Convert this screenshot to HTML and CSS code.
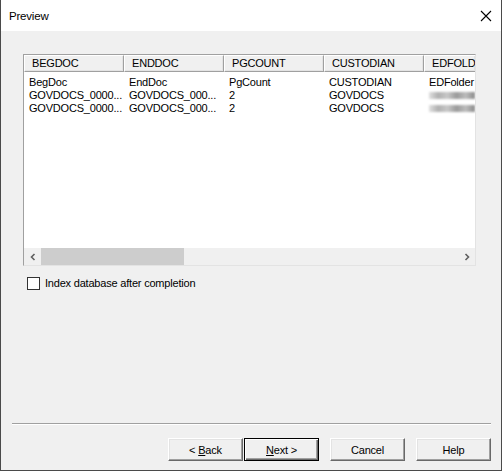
FILE: index.html
```html
<!DOCTYPE html>
<html>
<head>
<meta charset="utf-8">
<link rel="stylesheet" href="styles.css">
</head>
<body>
<div class="window">
  <div class="titlebar">
    <span class="title">Preview</span>
    <svg class="close" width="12" height="12" viewBox="0 0 12 12"><path d="M1 1 L11 11 M11 1 L1 11" stroke="#000" stroke-width="1.1" fill="none"/></svg>
  </div>
  <div class="content">
    <div class="list">
      <div class="header">
        <div class="hcell">BEGDOC</div>
        <div class="hcell">ENDDOC</div>
        <div class="hcell">PGCOUNT</div>
        <div class="hcell">CUSTODIAN</div>
        <div class="hcell last">EDFOLD</div>
      </div>
      <div class="rows">
        <div class="row"><span>BegDoc</span><span>EndDoc</span><span>PgCount</span><span>CUSTODIAN</span><span>EDFolder</span></div>
        <div class="row"><span>GOVDOCS_0000...</span><span>GOVDOCS_000...</span><span>2</span><span>GOVDOCS</span><span class="cell-blur"><i class="blur"></i></span></div>
        <div class="row"><span>GOVDOCS_0000...</span><span>GOVDOCS_000...</span><span>2</span><span>GOVDOCS</span><span class="cell-blur"><i class="blur"></i></span></div>
      </div>
      <div class="hscroll">
        <div class="arrow">
          <svg width="8" height="8" viewBox="0 0 8 8"><path d="M5.5 1 L2.5 4 L5.5 7" stroke="#606060" stroke-width="1.6" fill="none"/></svg>
        </div>
        <div class="track"><div class="thumb"></div></div>
        <div class="arrow">
          <svg width="8" height="8" viewBox="0 0 8 8"><path d="M2.5 1 L5.5 4 L2.5 7" stroke="#606060" stroke-width="1.6" fill="none"/></svg>
        </div>
      </div>
    </div>
    <label class="check"><span class="box"></span><span>Index database after completion</span></label>
    <div class="spacer"></div>
    <div class="footer">
      <div class="separator"></div>
      <div class="buttons">
        <div class="pair">
          <button class="btn">&lt; <u>B</u>ack</button>
          <button class="btn default"><u>N</u>ext &gt;</button>
        </div>
        <button class="btn">Cancel</button>
        <button class="btn">Help</button>
      </div>
    </div>
  </div>
</div>
</body>
</html>
```

FILE: styles.css
```css
html, body {
  margin: 0;
  padding: 0;
  background: #f0f0f0;
}
body {
  font-family: "Liberation Sans", Arial, sans-serif;
  font-size: 11px;
  letter-spacing: -0.2px;
  color: #000;
}
.window {
  width: 502px;
  height: 471px;
  box-sizing: border-box;
  border-left: 1px solid #4a4a4a;
  border-right: 1px solid #4a4a4a;
  border-bottom: 1px solid #4a4a4a;
  display: flex;
  flex-direction: column;
  background: #f0f0f0;
}
.titlebar {
  height: 31px;
  background: #fff;
  display: flex;
  align-items: center;
  justify-content: space-between;
  padding: 0 9px 0 8px;
  flex: none;
}
.title {
  font-size: 11.5px;
}
.close {
  display: block;
}
.content {
  flex: 1;
  display: flex;
  flex-direction: column;
  padding: 23px 0 0 0;
}
.list {
  margin-left: 22px;
  width: 453px;
  height: 212px;
  box-sizing: border-box;
  border: 1px solid #a0a0a0;
  border-right-color: #e3e3e3;
  border-bottom-color: #e3e3e3;
  background: #fff;
  display: flex;
  flex-direction: column;
}
.header {
  display: grid;
  grid-template-columns: 100px 100px 100px 100px 1fr;
  height: 17px;
  flex: none;
}
.hcell {
  box-sizing: border-box;
  border-top: 1px solid #fff;
  border-left: 1px solid #fff;
  border-right: 1px solid #a0a0a0;
  border-bottom: 1px solid #a0a0a0;
  background: #f0f0f0;
  padding-left: 7px;
  line-height: 15px;
  white-space: nowrap;
  overflow: hidden;
  box-shadow: inset -1px -1px 0 #e3e3e3;
}
.hcell.last {
  border-right: none;
}
.rows {
  flex: 1;
  padding-top: 4px;
}
.row {
  display: grid;
  grid-template-columns: 100px 100px 100px 100px 1fr;
  height: 13px;
  line-height: 13px;
  white-space: nowrap;
}
.row span {
  padding-left: 5px;
  overflow: hidden;
}
.row span.cell-blur {
  display: flex;
  align-items: center;
}
.blur {
  display: block;
  width: 48px;
  height: 7px;
  background: linear-gradient(90deg, #e0e0e0 0, #b0b0b0 20%, #c8c8c8 40%, #9a9a9a 60%, #bdbdbd 80%, #8a8a8a 100%);
  filter: blur(1px);
}
.hscroll {
  height: 17px;
  flex: none;
  display: flex;
  background: #f0f0f0;
}
.arrow {
  width: 17px;
  display: flex;
  align-items: center;
  justify-content: center;
  flex: none;
}
.track {
  flex: 1;
}
.thumb {
  width: 143px;
  height: 17px;
  background: #cdcdcd;
}
.check {
  margin: 10px 0 0 26px;
  display: flex;
  align-items: center;
  gap: 5px;
  height: 14px;
}
.box {
  width: 11px;
  height: 11px;
  border: 1px solid #333;
  background: #fff;
  flex: none;
}
.spacer {
  flex: 1;
}
.footer {
  padding: 0 10px 9px 11px;
}
.separator {
  border-top: 1px solid #a0a0a0;
  border-bottom: 1px solid #fff;
  margin-bottom: 13px;
}
.buttons {
  display: flex;
  justify-content: flex-end;
  gap: 11px;
}
.pair {
  display: flex;
  gap: 1px;
}
.btn {
  width: 75px;
  height: 23px;
  box-sizing: border-box;
  font-family: "Liberation Sans", Arial, sans-serif;
  font-size: 11px;
  letter-spacing: -0.2px;
  color: #000;
  background: #f0f0f0;
  border: 1px solid;
  border-color: #fff #696969 #696969 #fff;
  box-shadow: inset -1px -1px 0 #a0a0a0, inset 1px 1px 0 #e3e3e3;
  padding: 0;
}
.btn.default {
  border: 1px solid #000;
  box-shadow: inset 1px 1px 0 #fff, inset -1px -1px 0 #696969, inset -2px -2px 0 #a0a0a0;
}
```
